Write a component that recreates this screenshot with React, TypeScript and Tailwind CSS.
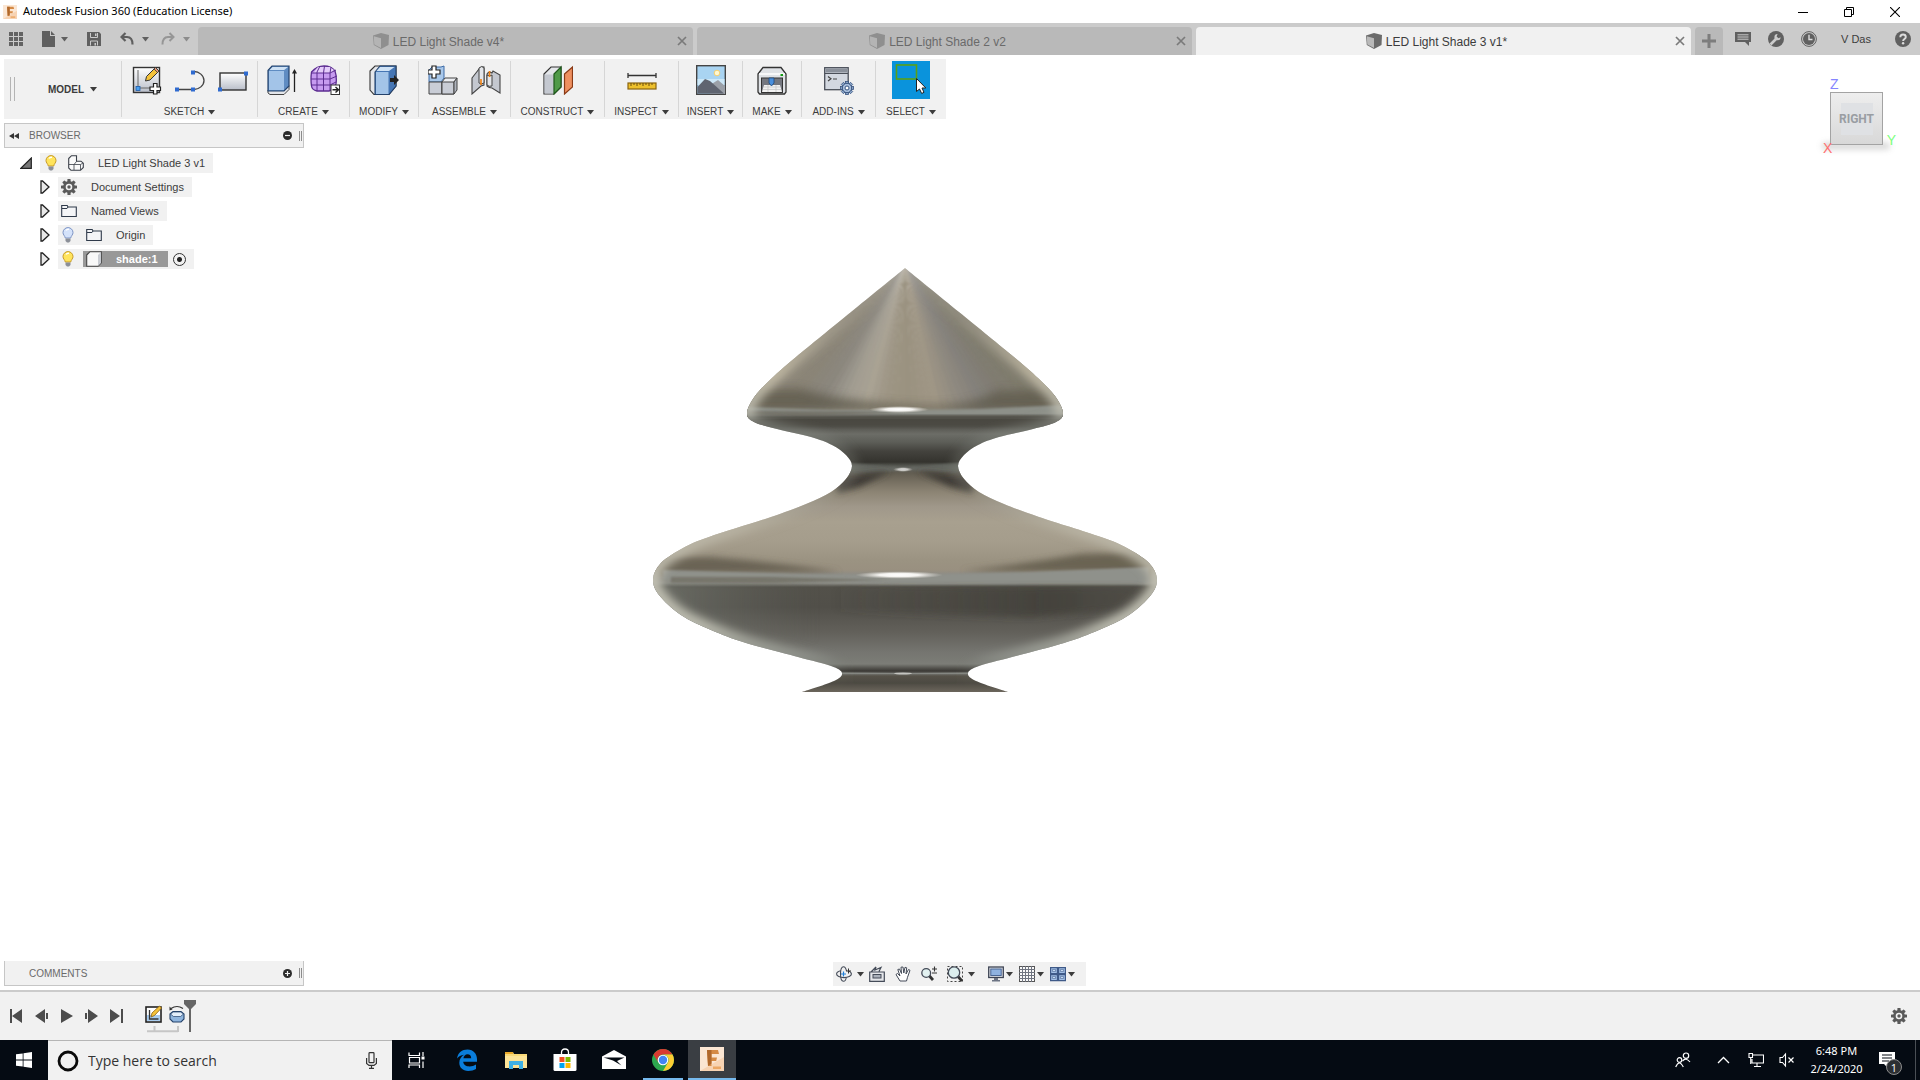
import type { ReactNode } from 'react';

// ── SHARED BITS ────────────────────────────────────────────────────────────

function Caret({ className = 'text-[#3c3c3c]' }: { className?: string }) {
  return (
    <svg width="7" height="5" viewBox="0 0 7 5" className={className} aria-hidden="true">
      <path d="M0 0h7L3.5 4.6z" fill="currentColor" />
    </svg>
  );
}

function Pic({ size = 16, box = size, children }: { size?: number; box?: number; children: ReactNode }) {
  return (
    <svg width={size} height={size} viewBox={`0 0 ${box} ${box}`} fill="none" className="shrink-0" aria-hidden="true">
      {children}
    </svg>
  );
}

const GEAR_TEETH = [0, 45, 90, 135, 180, 225, 270, 315];

function Gear({ size = 16 }: { size?: number }) {
  return (
    <Pic size={size} box={16}>
      {GEAR_TEETH.map((a) => (
        <rect key={a} x="6.4" y="0" width="3.2" height="4" rx="0.6" fill="#5a5a5a" transform={`rotate(${a} 8 8)`} />
      ))}
      <circle cx="8" cy="8" r="4.6" stroke="#5a5a5a" strokeWidth="2.6" />
      <circle cx="8" cy="8" r="1.7" fill="#5a5a5a" />
    </Pic>
  );
}

function FusionLogo({ size = 16 }: { size?: number }) {
  return (
    <Pic size={size} box={24}>
      <rect width="24" height="24" fill="#fbe6d3" />
      <path d="M0 24L24 10v14z" fill="#f7d3b3" />
      <path d="M7 3h11l1 4h-7.500v3.500H17l-.8 3.500h-4.700v5H8z" fill="#d58a45" />
      <path d="M7 3h4.500v13.500L8 19z" fill="#b0682c" />
      <path d="M13 19.500h8v2.500h-8z" fill="#eba765" />
    </Pic>
  );
}

// ── TAB STRIP ──────────────────────────────────────────────────────────────

function TabCube({ active }: { active?: boolean }) {
  return (
    <Pic size={16}>
      <path d="M0 2.500L8 0l8 2-.5 10L8 16 .8 12z" fill={active ? '#6b6b6b' : '#8f8f8f'} />
      <path d="M.8 3.200L8 5.200V15L1.300 11.500z" fill={active ? '#b9b9b9' : '#b4b4b4'} />
    </Pic>
  );
}

function DocTab({ name, active }: { name: string; active?: boolean }) {
  return (
    <div
      className={
        active
          ? 'flex h-7 flex-1 items-center rounded-t bg-[#f1f1f1] px-[6px] text-[#3c3c3c]'
          : 'flex h-7 flex-1 items-center rounded-t bg-[#b9b9b9] px-[6px] text-[#6a6a6a]'
      }
    >
      <button className="flex flex-1 items-center justify-center gap-1 pr-1 text-xs">
        <TabCube active={active} />
        <span className="pt-px">{name}</span>
      </button>
      <button aria-label={`Close ${name}`}>
        <Pic size={10}>
          <path d="M1 1l8 8M9 1L1 9" stroke="#7a7a7a" strokeWidth="1.700" />
        </Pic>
      </button>
    </div>
  );
}

function TabStrip() {
  return (
    <div className="flex h-8 shrink-0 bg-[#cbcbcb]">
      <div className="flex w-[198px] shrink-0 items-center pl-[9px] text-[#5f5f5f]">
        <button aria-label="Data panel">
          <Pic size={14}>
            {[0, 5, 10].map((y) => [0, 5, 10].map((x) => <rect key={`${x}-${y}`} x={x} y={y} width="4" height="4" fill="#636363" />))}
          </Pic>
        </button>
        <button aria-label="File" className="ml-[19px] flex items-center gap-[6px]">
          <svg width="13" height="16" viewBox="0 0 13 16" aria-hidden="true">
            <path d="M0 0h8v5h5v11H0zM9 0l4 4H9z" fill="#606060" />
          </svg>
          <Caret className="text-[#606060]" />
        </button>
        <button aria-label="Save" className="ml-[19px]">
          <Pic size={14}>
            <path d="M0 0h12l2 2v12H0z" fill="#606060" />
            <path d="M3.500 1v4.500h7V1M3.500 13.500V9h7v4.500" stroke="#cbcbcb" strokeWidth="1" />
            <path d="M7.500 11h1.500v2.500H7.500zM8 1.500h1.500V4H8z" fill="#cbcbcb" />
          </Pic>
        </button>
        <button aria-label="Undo" className="ml-[19px] flex items-center gap-2">
          <Pic size={14}>
            <path d="M5.500 1L1.500 5l4 4M1.500 5H7c3.500 0 5.500 2.500 5.500 7.500" stroke="#5f5f5f" strokeWidth="2.200" />
          </Pic>
          <Caret className="text-[#606060]" />
        </button>
        <button aria-label="Redo" className="ml-3 flex items-center gap-2">
          <Pic size={14}>
            <path d="M8.500 1l4 4-4 4M12.500 5H7c-3.500 0-5.500 2.500-5.500 7.500" stroke="#969696" strokeWidth="2" />
          </Pic>
          <Caret className="text-[#8c8c8c]" />
        </button>
      </div>

      <div className="flex min-w-0 flex-1 items-end gap-1">
        <DocTab name="LED Light Shade v4*" />
        <DocTab name="LED Light Shade 2 v2" />
        <DocTab name="LED Light Shade 3 v1*" active />
      </div>

      <div className="ml-1 flex w-[225px] shrink-0 items-center">
        <button aria-label="New design" className="flex h-7 w-7 items-center justify-center self-end rounded-t bg-[#b9b9b9]">
          <Pic size={14}>
            <path d="M7 0v14M0 7h14" stroke="#7d7d7d" strokeWidth="3" />
          </Pic>
        </button>
        <button aria-label="Comments" className="ml-3">
          <Pic size={16}>
            <path d="M0 1h16v10h-2v4l-4-4H0z" fill="#606060" />
            <path d="M2.500 3.800h11M2.500 6h11M2.500 8.200h11" stroke="#cbcbcb" strokeWidth="1" />
          </Pic>
        </button>
        <button aria-label="Extensions" className="ml-[17px]">
          <Pic size={16}>
            <circle cx="8" cy="8" r="8" fill="#606060" />
            <path d="M2.500 13.500L8 8" stroke="#cbcbcb" strokeWidth="2.600" />
            <path d="M12.600 6.300a3.100 3.100 0 1 1-3-3.200L8.600 5.500l1.900 1.800z" fill="#cbcbcb" />
          </Pic>
        </button>
        <button aria-label="Job status" className="ml-[17px]">
          <Pic size={16}>
            <circle cx="8" cy="8" r="7.400" stroke="#606060" strokeWidth="1" />
            <circle cx="8" cy="8" r="6" fill="#606060" />
            <path d="M8 3.800V8.500h3.500" stroke="#dcdcdc" strokeWidth="1.400" />
          </Pic>
        </button>
        <button className="ml-6 text-[11px] text-[#3c3c3c]">V Das</button>
        <button aria-label="Help" className="ml-6">
          <Pic size={16}>
            <circle cx="8" cy="8" r="8" fill="#606060" />
            <path d="M5.300 6.200C5.300 2.600 10.800 2.800 10.800 6c0 2-2.700 2-2.700 4" stroke="#dcdcdc" strokeWidth="1.900" />
            <circle cx="8.100" cy="12.300" r="1.200" fill="#dcdcdc" />
          </Pic>
        </button>
      </div>
    </div>
  );
}

// ── RIBBON ICONS (30 x 30) ─────────────────────────────────────────────────

function Ico({ children }: { children: ReactNode }) {
  return <Pic size={30}>{children}</Pic>;
}

const SketchIcon = () => (
  <Ico>
    <rect x="1.500" y="2.500" width="26" height="25" fill="url(#steel)" stroke="#333" strokeWidth="1.400" />
    <path d="M6 5v18h18" stroke="#666" strokeWidth="1" />
    <rect x="4" y="21.500" width="4" height="4" fill="#4aa0f0" stroke="#1c5aa8" strokeWidth=".8" />
    <path d="M13.500 16l1-4.500L23.500 2.500l3.500 3.500-9 9z" fill="#f5c33b" stroke="#333" strokeWidth="1" />
    <path d="M22 4l3.500 3.500L27 6l-3.500-3.500z" fill="#e89a7a" stroke="#333" strokeWidth=".8" />
    <path d="M21.500 18.500h3.500V22h3.500v3.500H25V29h-3.500v-3.500H18V22h3.500z" fill="#fff" stroke="#222" strokeWidth="1.200" />
  </Ico>
);

const LineIcon = () => (
  <Ico>
    <path d="M2 24.500h17c5 0 10-4 10-9s-5-9-10-9" stroke="#444" strokeWidth="1.300" />
    <path d="M0 22.500h4v4H0zM16 22.500h4v4h-4zM16 5.500h4v4h-4z" fill="#2f6bd0" />
  </Ico>
);

const RectIcon = () => (
  <Ico>
    <rect x="2" y="8" width="26" height="17" fill="url(#steel)" stroke="#333" strokeWidth="1.400" />
    <path d="M0 22.500h4v4H0zM26 6.500h4v4h-4z" fill="#2f6bd0" />
  </Ico>
);

const ExtrudeIcon = () => (
  <Ico>
    <path d="M1 25v3l2 1.500h14l5-5v-4z" fill="#e4e6ea" stroke="#444" strokeWidth="1" />
    <path d="M1 5.500L5 1h17v20l-5 5H1z" fill="#5f8cc2" stroke="#24426b" strokeWidth="1.200" />
    <path d="M2 6h15v19H2z" fill="#a3c4e8" />
    <path d="M2.500 5L5.500 2h15.500l-3.800 3z" fill="#cfe2f5" />
    <path d="M27.500 27V6" stroke="#222" strokeWidth="1.300" />
    <path d="M25 8.500L27.500 4 30 8.500z" fill="#222" />
  </Ico>
);

const FormIcon = () => (
  <Ico>
    <path d="M1.500 7Q7 1 14 1t11 5q2 6 1 13-2 6-7 7H7q-5-1-5.500-5-1-7 0-14z" fill="#c79bf0" stroke="#5c2d91" strokeWidth="1.300" />
    <path d="M6 4l2-2h12l4 3-3 3H4z" fill="#e4ccfa" />
    <path d="M1 8h19l6-3M1 14h19l7-3M1 20h19l6-3M7 26V7l3-6M13.500 26V8l1-7M20 26V8l1-6" stroke="#5c2d91" strokeWidth="1" />
    <rect x="21" y="20" width="8.500" height="9.500" fill="#fff" stroke="#333" strokeWidth="1" />
    <path d="M22.500 24.800h5.500M25.500 22l3 2.800-3 2.800" stroke="#222" strokeWidth="1.400" />
  </Ico>
);

const PressPullIcon = () => (
  <Ico>
    <path d="M1 6l5-5h21v20l-7 8.500H5L1 25z" fill="#e4e6ea" stroke="#333" strokeWidth="1.100" />
    <path d="M6 7l5-6h16v20l-7 8.500H6z" fill="#4676b4" stroke="#24426b" strokeWidth="1.100" />
    <path d="M7 7h12.500v22H7z" fill="#a3c4e8" />
    <path d="M7.500 6L11 2h14.500L20 6z" fill="#cfe2f5" />
    <path d="M21 13h4V10l5 5-5 5v-3h-4z" fill="#222" />
  </Ico>
);

const ComponentIcon = () => (
  <Ico>
    <path d="M1 5l3-3h9l3-1v12l-3 4H1z" fill="#a9c8ea" stroke="#3d6ba6" strokeWidth="1" />
    <path d="M1 17h13v12H1z" fill="#c9cdd6" stroke="#444" />
    <path d="M14 17l3-4h12l-3 4v12H14z" fill="#eceef2" stroke="#444" />
    <path d="M14 17h12v12H14z" fill="#c9cdd6" stroke="#444" />
    <path d="M26 17l3-4v12l-3 4z" fill="#aeb3bd" stroke="#444" />
    <path d="M4 1h4v4h4v4H8v4H4V9H0V5h4z" fill="#fff" stroke="#222" strokeWidth="1.200" />
  </Ico>
);

const JointIcon = () => (
  <Ico>
    <path d="M1 13l7-9q2-3 5-2v18l-3 1-9 8z" fill="#c4c8d0" stroke="#444" strokeWidth="1.100" />
    <path d="M8 3q3-3 5 0v15q-3 2-5 0z" fill="#e4e6ea" stroke="#444" />
    <path d="M16 9q2-3 5-1l1-2 7 4v18l-8-5q-3 0-5-2z" fill="#c4c8d0" stroke="#444" strokeWidth="1.100" />
    <path d="M16 10q3 2 5 0v11q-3 1-5-1z" fill="#e4e6ea" stroke="#444" />
    <path d="M10 14v6M18.500 6v6" stroke="#f08010" strokeWidth="1.600" />
  </Ico>
);

const PlaneIcon = () => (
  <Ico>
    <path d="M1 9l7-7h10v20l-7 7H1z" fill="#e4e6ea" stroke="#333" strokeWidth="1.200" />
    <path d="M1.500 9.500H11v19H1.500z" fill="#c4c8d0" />
    <path d="M11 9l7-7v20l-7 7z" fill="#4f9a48" stroke="#1f5a1c" strokeWidth="1.200" />
    <path d="M21.500 9l8-7v20l-8 7z" fill="#ee9060" stroke="#8a3a16" strokeWidth="1.200" />
  </Ico>
);

const MeasureIcon = () => (
  <Ico>
    <path d="M1 8v5M29 8v5M1 10.500h28" stroke="#333" strokeWidth="1.300" />
    <rect x="1" y="18" width="28" height="6" fill="#edc02c" stroke="#8a6410" strokeWidth="1.200" />
    <path d="M4 18v3M7 18v2M10 18v3M13 18v2M16 18v3M19 18v2M22 18v3M25 18v2" stroke="#6b4d0c" strokeWidth="1" />
  </Ico>
);

const InsertIcon = () => (
  <Ico>
    <rect x=".7" y=".7" width="28.600" height="28.600" fill="#a9d4f2" stroke="#444" strokeWidth="1.400" />
    <path d="M1.500 14h27v6h-27z" fill="#cde8f8" />
    <circle cx="21" cy="8" r="2.800" fill="#fff8d0" stroke="#f5cf70" />
    <path d="M14 20l8-5 7 6v8H14z" fill="#9ba0a8" />
    <path d="M1.500 22L9 14l5 2 14 12.500H1.500z" fill="#5f6470" />
  </Ico>
);

const MakeIcon = () => (
  <Ico>
    <path d="M1 9l5-6.500h18L29 9v18l-1.500 2h-25L1 27z" fill="#dfe2e6" stroke="#333" strokeWidth="1.300" />
    <path d="M2 9h26" stroke="#fff" strokeWidth="1.500" />
    <rect x="4.500" y="13" width="21" height="14.500" fill="#74777f" stroke="#333" />
    <path d="M7 20h16l2 7H5z" fill="#f2f2f2" />
    <path d="M7 22h16M6 24.500h18M11 20v7M19 20v7" stroke="#c4c4c4" strokeWidth=".7" />
    <path d="M12 13h5v5l-2.500 3-2.500-3z" fill="#4a8fdc" stroke="#1c4a80" strokeWidth=".8" />
    <rect x="23.500" y="9" width="2.500" height="2" fill="#159a15" />
  </Ico>
);

const AddInsIcon = () => (
  <Ico>
    <rect x=".7" y="2.700" width="23.500" height="22" fill="#d3d8e0" stroke="#4a4f58" strokeWidth="1.300" />
    <path d="M1.500 3.500h22v4h-22z" fill="#8a909a" />
    <path d="M1 8.500h23" stroke="#4a4f58" />
    <path d="M4 11.500l3 2.300-3 2.300M9 14h4" stroke="#444" strokeWidth="1.200" />
    {GEAR_TEETH.map((a) => (
      <rect key={a} x="21.500" y="16.500" width="3" height="3.500" fill="#8fa9cc" stroke="#38547f" strokeWidth=".8" transform={`rotate(${a} 23 23)`} />
    ))}
    <circle cx="23" cy="23" r="4.700" fill="#a9bfdd" stroke="#38547f" strokeWidth="1" />
    <circle cx="23" cy="23" r="2" fill="#fff" stroke="#38547f" />
  </Ico>
);

const SelectIcon = () => (
  <span className="flex h-[38px] w-[38px] items-center justify-center bg-[#0a93dc]">
    <Pic size={38}>
      <rect x="4.500" y="4" width="20" height="14" stroke="#5aa016" strokeWidth="1.600" />
      <path d="M24.500 17.500v13l3-2.500 2.200 4.500 2.300-1.200-2-4.300h3.800z" fill="#fff" stroke="#222" strokeWidth="1" />
    </Pic>
  </span>
);

type RibbonGroup = { label: string; className: string; icons: (() => ReactNode)[] };

const RIBBON: RibbonGroup[] = [
  { label: 'SKETCH', className: 'w-[136px]', icons: [SketchIcon, LineIcon, RectIcon] },
  { label: 'CREATE', className: 'w-[92px]', icons: [ExtrudeIcon, FormIcon] },
  { label: 'MODIFY', className: 'w-[69px]', icons: [PressPullIcon] },
  { label: 'ASSEMBLE', className: 'w-[92px]', icons: [ComponentIcon, JointIcon] },
  { label: 'CONSTRUCT', className: 'w-[94px]', icons: [PlaneIcon] },
  { label: 'INSPECT', className: 'w-[74px]', icons: [MeasureIcon] },
  { label: 'INSERT', className: 'w-[64px]', icons: [InsertIcon] },
  { label: 'MAKE', className: 'w-[59px]', icons: [MakeIcon] },
  { label: 'ADD-INS', className: 'w-[74px]', icons: [AddInsIcon] },
  { label: 'SELECT', className: 'w-[70px]', icons: [SelectIcon] },
];

function Ribbon() {
  return (
    <div className="ml-1 mt-1 flex h-[60px] w-fit items-center bg-[#f1f1f1]">
      <div className="flex h-14 w-[118px] items-center border-r border-[#d6d6d6] pl-[6px]">
        <span className="h-6 w-[5px] border-x border-[#b4b4b4]" />
        <button className="ml-[33px] flex items-center gap-[6px] text-[10px] font-bold text-[#3c3c3c]">
          MODEL <Caret />
        </button>
      </div>
      {RIBBON.map((g) => (
        <div key={g.label} className={`flex h-14 flex-col items-center justify-between border-r border-[#d6d6d6] last:border-0 ${g.className}`}>
          <div className="flex h-[38px] items-center gap-[13px]">
            {g.icons.map((Icon, i) => (
              <button key={i} aria-label={`${g.label} ${i + 1}`}>
                <Icon />
              </button>
            ))}
          </div>
          <button className="flex items-center gap-1 text-[10px] leading-[10px] text-[#3c3c3c]">
            {g.label} <Caret />
          </button>
        </div>
      ))}
    </div>
  );
}

// ── BROWSER TREE ───────────────────────────────────────────────────────────

function Bulb({ on }: { on?: boolean }) {
  return (
    <svg width="12" height="16" viewBox="0 0 12 16" aria-hidden="true">
      <path d="M6 .6a5 5 0 0 1 5 5c0 2.200-1.800 3-2.300 5.400H3.300C2.800 8.600 1 7.800 1 5.600a5 5 0 0 1 5-5z" fill={on ? '#ffe45c' : '#d4e2fa'} stroke={on ? '#c79a26' : '#7c93c4'} />
      <path d="M4 3.500Q5 2 7 2.300" stroke="#fff" strokeWidth="1.300" fill="none" />
      <path d="M3.500 11.500h5v2.500L7 15.500H5L3.500 14z" fill="#8b8f98" />
    </svg>
  );
}

const Folder = () => (
  <Pic size={16}>
    <path d="M.7 13.500V2.500h5.500l.8 1.500h8.300v9.500z" fill="#f4f5f7" stroke="#2f3a4a" strokeWidth="1.100" />
    <path d="M1 5.500h5l1-1.500" stroke="#2f3a4a" strokeWidth="1" />
  </Pic>
);

const Body = () => (
  <Pic size={16}>
    <path d="M.7 4L4 .7h11.300v11L12 15.300H.7z" fill="#f8f8f8" stroke="#444" strokeWidth="1.100" />
    <path d="M12 4l3-3v11l-3 3z" fill="#c9ccd2" />
  </Pic>
);

const Assembly = () => (
  <Pic size={16}>
    <path d="M.7 3.500L3.500.7h5v5.500h4.500l2.300 2v4.300l-2.800 2.800H3L.7 13z" fill="#fafafa" stroke="#3a3f48" strokeWidth="1.100" />
    <path d="M6 15V9.500l2.500-3M6 9.500h6.500l2.500-1.500M12.500 9.500V15M1 9.500h5" stroke="#3a3f48" strokeWidth=".8" />
  </Pic>
);

const Expander = () => (
  <button aria-label="Expand" className="w-[18px] shrink-0">
    <svg width="10" height="14" viewBox="0 0 10 14" aria-hidden="true">
      <path d="M1 1h1.500l6.500 6-6.500 6H1z" fill="#e8e8e8" stroke="#222" strokeWidth="1.300" />
    </svg>
  </button>
);

function PanelHeader({ title, open }: { title: string; open?: boolean }) {
  return (
    <>
      <span className="w-5 pl-1">
        {open && (
          <svg width="10" height="6" viewBox="0 0 10 6" aria-hidden="true">
            <path d="M5 0v6L0 3zM10 0v6L5 3z" fill="#333" />
          </svg>
        )}
      </span>
      <h2 className="ml-1 flex-1 text-[10px] text-[#6a6a6a]">{title}</h2>
      <button aria-label={open ? `Collapse ${title}` : `Expand ${title}`}>
        <Pic size={9}>
          <circle cx="4.500" cy="4.500" r="4.500" fill="#2b2b2b" />
          <path d={open ? 'M2 4.500h5' : 'M2 4.500h5M4.500 2v5'} stroke="#f1f1f1" strokeWidth="1.200" />
        </Pic>
      </button>
      <span className="ml-[7px] mr-px h-[10px] w-[3px] border-x border-[#8c8c8c]" />
    </>
  );
}

function BrowserPanel() {
  return (
    <div className="ml-1 mt-1 w-[300px] text-[11px] text-[#3c3c3c]">
      <div className="flex h-[25px] items-center border border-[#c6c6c6] bg-[#f1f1f1]">
        <PanelHeader title="BROWSER" open />
      </div>
      <ul className="mt-[5px] space-y-1">
        <li className="flex h-5 items-center pl-4">
          <button aria-label="Collapse" className="w-5">
            <svg width="12" height="12" viewBox="0 0 12 12" aria-hidden="true">
              <path d="M11.300 1v10.300H.8z" fill="#777" stroke="#222" strokeWidth="1.200" />
            </svg>
          </button>
          <span className="flex h-5 items-center bg-[#f1f1f1] pl-[5px] pr-2">
            <Bulb on />
            <span className="ml-[11px] mr-[14px]"><Assembly /></span>
            LED Light Shade 3 v1
          </span>
        </li>
        <li className="flex h-5 items-center pl-9">
          <Expander />
          <span className="flex h-5 items-center gap-[14px] bg-[#f1f1f1] pl-[3px] pr-2"><Gear /> Document Settings</span>
        </li>
        <li className="flex h-5 items-center pl-9">
          <Expander />
          <span className="flex h-5 items-center gap-[14px] bg-[#f1f1f1] pl-[3px] pr-2"><Folder /> Named Views</span>
        </li>
        <li className="flex h-5 items-center pl-9">
          <Expander />
          <span className="flex h-5 items-center bg-[#f1f1f1] pl-1 pr-2">
            <Bulb />
            <span className="ml-3 mr-[14px]"><Folder /></span>
            Origin
          </span>
        </li>
        <li className="flex h-5 items-center pl-9">
          <Expander />
          <label className="flex h-5 items-center bg-[#f1f1f1] pl-1 pr-2">
            <Bulb on />
            <span className="ml-[9px] flex h-4 items-center gap-[14px] bg-[#989898] pl-[3px] pr-[10px] font-bold text-white">
              <Body /> shade:1
            </span>
            <input
              type="radio"
              name="active-component"
              defaultChecked
              className="ml-[5px] h-[13px] w-[13px] appearance-none rounded-full border border-[#333] bg-[radial-gradient(circle,#222_0_2px,transparent_3px)]"
            />
          </label>
        </li>
      </ul>
    </div>
  );
}

// ── LAMP SHADE MODEL ───────────────────────────────────────────────────────

// left half of the revolved profile, tip first
const PROFILE = [
  [254, 1], [200, 45], [145, 90], [121, 111], [104, 129], [96, 146], [103, 155], [126, 162], [160, 170], [181, 178],
  [195, 188], [201, 199], [195, 212], [180, 225], [155, 237], [120, 250], [58, 270], [32, 281], [10, 296], [2, 312],
  [8, 328], [30, 348], [60, 363], [95, 376], [147, 390], [180, 399], [191, 406], [183, 414], [151, 425],
];

function smooth(points: number[][]) {
  let d = '';
  for (let i = 0; i < points.length - 1; i++) {
    const p0 = points[Math.max(i - 1, 0)];
    const p1 = points[i];
    const p2 = points[i + 1];
    const p3 = points[Math.min(i + 2, points.length - 1)];
    d += `C${p1[0] + (p2[0] - p0[0]) / 6} ${p1[1] + (p2[1] - p0[1]) / 6} ${p2[0] - (p3[0] - p1[0]) / 6} ${p2[1] - (p3[1] - p1[1]) / 6} ${p2[0]} ${p2[1]}`;
  }
  return d;
}

const MIRRORED = PROFILE.map(([x, y]) => [508 - x, y]).reverse();
const OUTLINE = `M254 1${smooth(PROFILE)}L357 425${smooth(MIRRORED)}Z`;

// slope of the ray from the tip, shade of the metal along it
const RAYS: [number, number[]][] = [
  [-1.4, [140, 134, 120]], [-0.82, [137, 131, 118]], [-0.61, [138, 134, 125]], [-0.44, [160, 155, 144]], [-0.28, [169, 162, 148]],
  [-0.14, [157, 149, 132]], [0.02, [154, 146, 128]], [0.22, [159, 150, 133]], [0.39, [144, 138, 128]], [0.57, [131, 128, 122]],
  [0.77, [127, 123, 112]], [0.93, [126, 122, 108]], [1.4, [128, 124, 112]],
];

const WEDGES = Array.from({ length: 56 }, (_, i) => {
  const s = -1.4 + i * 0.05;
  const k = Math.max(RAYS.findIndex(([r]) => r > s + 0.025), 1);
  const [r0, c0] = RAYS[k - 1];
  const [r1, c1] = RAYS[k];
  const f = (s + 0.025 - r0) / (r1 - r0);
  return {
    d: `M254 -3L${254 + s * 153} 150H${254 + (s + 0.055) * 153}Z`,
    fill: `rgb(${c0.map((c, j) => Math.round(c + (c1[j] - c) * f)).join(',')})`,
  };
});

const METAL: [number, string][] = [
  [140, '#8d8a80'], [147, '#77766f'], [150, '#4a4841'], [158, '#4f4e48'], [167, '#6c6d67'], [175, '#5d5e58'], [184, '#44433e'],
  [195, '#34332e'], [198, '#4f504a'], [202, '#62625c'], [206, '#625d51'], [214, '#756e60'], [225, '#8c8474'], [240, '#a0988a'],
  [255, '#a8a08f'], [275, '#a59d8c'], [293, '#9b9382'], [303, '#999080'], [307, '#8f8c84'], [316, '#8b8b84'], [320, '#53514a'],
  [340, '#514f49'], [365, '#62605a'], [385, '#757570'], [397, '#7c7d77'], [401, '#55544f'], [404, '#3b3935'], [407, '#6f6f6a'],
  [409, '#565249'], [416, '#4c4942'], [425, '#6b655b'],
];

function LampShade() {
  return (
    <svg viewBox="0 0 508 426" className="block h-[426px] w-[508px]" role="img" aria-label="Lamp shade model, right view">
      <defs>
        <clipPath id="outline"><path d={OUTLINE} /></clipPath>
        <linearGradient id="metal" gradientUnits="userSpaceOnUse" x1="0" y1="140" x2="0" y2="425">
          {METAL.map(([y, c]) => <stop key={y} offset={(y - 140) / 285} stopColor={c} />)}
        </linearGradient>
        <linearGradient id="rim" gradientUnits="userSpaceOnUse" x1="0" y1="0" x2="0" y2="426">
          <stop offset="0" stopColor="#a8a292" stopOpacity="0" />
          <stop offset=".1" stopColor="#a8a292" stopOpacity=".3" />
          <stop offset=".25" stopColor="#c4bca6" stopOpacity=".9" />
          <stop offset=".34" stopColor="#c0c0b4" stopOpacity=".9" />
          <stop offset=".37" stopColor="#8d918a" stopOpacity=".5" />
          <stop offset=".44" stopColor="#7d8079" stopOpacity=".3" />
          <stop offset=".52" stopColor="#9a978a" stopOpacity=".3" />
          <stop offset=".62" stopColor="#bdb8a8" stopOpacity=".8" />
          <stop offset=".73" stopColor="#c2c0b2" />
          <stop offset=".84" stopColor="#bdbdb0" />
          <stop offset=".92" stopColor="#969a93" stopOpacity=".7" />
          <stop offset=".94" stopColor="#7d8079" stopOpacity=".1" />
          <stop offset="1" stopColor="#7d8079" stopOpacity="0" />
        </linearGradient>
        <linearGradient id="shadeRight" x1="0" y1="0" x2="1" y2="0">
          <stop offset="0" stopColor="#403e38" stopOpacity="0" />
          <stop offset=".7" stopColor="#403e38" stopOpacity=".9" />
          <stop offset="1" stopColor="#4d4a43" stopOpacity=".7" />
        </linearGradient>
        <linearGradient id="greenLeft" x1="0" y1="0" x2="1" y2="0">
          <stop offset="0" stopColor="#8d938b" />
          <stop offset="1" stopColor="#6b6f69" stopOpacity="0" />
        </linearGradient>
        <radialGradient id="glint">
          <stop offset="0" stopColor="#fff" />
          <stop offset=".45" stopColor="#f4f3f0" />
          <stop offset="1" stopColor="#d8d5ce" stopOpacity="0" />
        </radialGradient>
        <filter id="soft1" x="-20%" y="-50%" width="140%" height="200%"><feGaussianBlur stdDeviation="1" /></filter>
        <filter id="soft3" x="-20%" y="-50%" width="140%" height="200%"><feGaussianBlur stdDeviation="3" /></filter>
        <filter id="soft6" x="-20%" y="-50%" width="140%" height="200%"><feGaussianBlur stdDeviation="5" /></filter>
      </defs>

      <g clipPath="url(#outline)">
        <rect y="138" width="508" height="288" fill="url(#metal)" />
        <g filter="url(#soft1)">
          {WEDGES.map((w) => <path key={w.d} d={w.d} fill={w.fill} />)}
        </g>

        {/* cone foot and rim band */}
        <path d="M80 122L150 122Q190 134 254 138T345 124L430 122V144H80Z" fill="#625d50" filter="url(#soft6)" opacity=".85" />
        <path d="M90 147L254 147 418 147V152H90Z" fill="#5c5b54" />
        <path d="M96 140L180 143 254 143 330 142 412 138V148H254L96 149Z" fill="#8d9089" filter="url(#soft1)" />
        <path d="M96 144L200 144.500 254 146 160 149H96Z" fill="#6e6c62" filter="url(#soft1)" opacity=".8" />
        <path d="M90 149H418V160H90Z" fill="#48463f" opacity=".55" filter="url(#soft1)" />
        <ellipse cx="248" cy="142.500" rx="30" ry="3.400" fill="url(#glint)" />

        {/* upper neck */}
        <path d="M190 196L252 200 318 195V208L258 202 190 209Z" fill="#6c706a" filter="url(#soft1)" opacity=".6" />
        <path d="M186 210L240 204 208 220 186 226Z" fill="#35332e" filter="url(#soft3)" opacity=".85" />
        <path d="M322 210L266 204 300 220 322 226Z" fill="#35332e" filter="url(#soft3)" opacity=".85" />
        <ellipse cx="252" cy="202.500" rx="10" ry="2.400" fill="url(#glint)" opacity=".7" />

        {/* wide disc */}
        <path d="M0 290L60 290Q120 295 190 305L0 307Z" fill="#625b4e" filter="url(#soft3)" opacity=".85" />
        <path d="M508 285L430 287Q370 298 310 304L508 306Z" fill="#625b4c" filter="url(#soft3)" opacity=".85" />
        <path d="M12 303L150 307 254 308 380 305 498 300V317H254L12 313Z" fill="#8f918b" filter="url(#soft1)" />
        <path d="M20 310L120 310 240 313 120 316H20Z" fill="#6e6c61" filter="url(#soft1)" opacity=".7" />
        <rect y="316" width="170" height="60" fill="url(#greenLeft)" opacity=".45" filter="url(#soft3)" />
        <path d="M180 320H490L470 342 380 350 180 345Z" fill="url(#shadeRight)" filter="url(#soft3)" opacity=".8" />
        <ellipse cx="248" cy="308" rx="44" ry="3.800" fill="url(#glint)" />

        {/* lower neck */}
        <path d="M190 405.500L254 406 318 405.500V407H190Z" fill="#858782" />
        <ellipse cx="252" cy="406.500" rx="9" ry=".9" fill="#c4c4c0" />

        <path d={OUTLINE} fill="none" stroke="url(#rim)" strokeWidth="14" filter="url(#soft6)" />
      </g>
    </svg>
  );
}

// ── VIEW CUBE ──────────────────────────────────────────────────────────────

function ViewCube() {
  return (
    <div className="absolute right-[37px] top-[37px] h-[53px] w-[53px]">
      <span className="absolute -bottom-1 -left-2 h-[6px] w-[68px] rounded-full bg-[#8c8c8c] opacity-40 blur-[3px]" />
      <span className="absolute -top-4 left-0 text-sm leading-4 text-[#8585ff]">Z</span>
      <button className="relative flex h-[53px] w-[53px] items-center justify-center border border-[#a3a3a3] bg-gradient-to-b from-[#eeeeee] to-[#d8d8d8] font-['Roboto',sans-serif] text-xs font-bold text-[#999da2]">
        <span className="flex h-8 w-8 items-center justify-center bg-[#dfe1e4]">RIGHT</span>
      </button>
      <span className="absolute -bottom-[9px] -left-[7px] text-sm leading-3 text-[#ff7070]">X</span>
      <span className="absolute -bottom-px -right-[13px] text-sm leading-3 text-[#7dff7d]">Y</span>
    </div>
  );
}

// ── NAVIGATION BAR ─────────────────────────────────────────────────────────

function NavBar() {
  return (
    <div className="absolute bottom-1 left-[833px] flex h-6 w-[253px] items-center bg-[#f1f1f1] pl-[3px]">
      <button aria-label="Orbit" className="flex items-center gap-[5px]">
        <Pic size={16}>
          <path d="M4.500 4.800C2 5.500.6 6.700.6 8c0 2 3.300 3.600 7.400 3.600s7.400-1.600 7.400-3.600c0-1.200-1.200-2.200-3-2.900" stroke="#444b58" strokeWidth="1.100" />
          <path d="M10.500 5C10 2.400 8.800.7 7.500.7c-1.700 0-3 3.200-3 7.300s1.300 7.300 3 7.300c1.300 0 2.400-1.500 2.800-3.800" stroke="#444b58" strokeWidth="1.100" />
          <path d="M7.500 5.500v5M5 8h5" stroke="#1f7fd8" strokeWidth="1.200" />
          <path d="M12.500 2.500v5M10 5h5" stroke="#333" />
        </Pic>
        <Caret />
      </button>
      <button aria-label="Look at" className="ml-[5px]">
        <Pic size={16}>
          <path d="M.7 6h14.600v9.300H.7zM2 6L7 1l-1 3 6-2.500-2 4" fill="#e4e6ea" stroke="#444b58" strokeWidth="1.200" />
          <rect x="4" y="8.500" width="8" height="3.500" fill="#aab0ba" stroke="#444b58" />
        </Pic>
      </button>
      <button aria-label="Pan" className="ml-[10px]">
        <Pic size={16}>
          <path d="M5 15L1 8.500 2.500 7.500 5 10 2.800 3.500 4.500 3 6.500 7.500 6 1.200 8 1l.8 6L10 1.300l1.700.5L11 8l2.500-4.500 1.500.8-2.500 7L11.500 15z" fill="#fff" stroke="#444b58" strokeWidth="1" />
        </Pic>
      </button>
      <button aria-label="Zoom" className="ml-[10px]">
        <Pic size={16}>
          <path d="M8 9.500l4 4.500" stroke="#333" strokeWidth="2.800" />
          <circle cx="5.200" cy="7" r="4.400" fill="#e2f1f0" stroke="#444b58" strokeWidth="1.300" />
          <path d="M11 3h5M13.500.5v5M11 7h5" stroke="#333" strokeWidth="1.100" />
        </Pic>
      </button>
      <button aria-label="Zoom window" className="ml-[10px] flex items-center gap-[5px]">
        <Pic size={16}>
          <path d="M.5.5h15v15H.5z" stroke="#444" strokeDasharray="2 2" />
          <path d="M11 10.500l4 4.500" stroke="#333" strokeWidth="2.800" />
          <circle cx="7" cy="6.500" r="5.700" fill="#dceeee" stroke="#444b58" strokeWidth="1.300" />
        </Pic>
        <Caret />
      </button>
      <button aria-label="Display settings" className="ml-[13px] flex items-center gap-[2px]">
        <Pic size={16}>
          <rect x=".7" y="1" width="14.600" height="10.500" fill="#dfe2e8" stroke="#3d4454" strokeWidth="1.300" />
          <rect x="2.800" y="3" width="10.400" height="6.500" fill="#8fb2e0" stroke="#4a6694" />
          <path d="M6 12h4v2h2v1.500H4V14h2z" fill="#6d7484" />
        </Pic>
        <Caret />
      </button>
      <button aria-label="Grid and snaps" className="ml-[6px] flex items-center gap-[2px]">
        <Pic size={16}>
          <rect x=".5" y=".5" width="15" height="15" fill="#fafafa" stroke="#555" />
          <path d="M3.500 0v16M6.500 0v16M9.500 0v16M12.500 0v16M0 3.500h16M0 6.500h16M0 9.500h16M0 12.500h16" stroke="#6f7480" />
        </Pic>
        <Caret />
      </button>
      <button aria-label="Viewports" className="ml-[6px] flex items-center gap-[2px]">
        <Pic size={16}>
          <path d="M.6 1.600h6.800v6H.6zM8.600 1.600h6.800v6H8.600zM.6 8.600h6.800v6H.6zM8.600 8.600h6.800v6H8.600z" fill="#a3c0e6" stroke="#3f5a88" strokeWidth="1.200" />
          <path d="M2.500 3.500h3v2h-3zM10.500 3.500h3v2h-3zM2.500 10.500h3v2h-3zM10.500 10.500h3v2h-3z" fill="#c6daf2" stroke="#4a6694" strokeWidth=".6" />
        </Pic>
        <Caret />
      </button>
    </div>
  );
}

// ── TIMELINE ───────────────────────────────────────────────────────────────

const PLAYBACK = [
  { name: 'Go to start', d: 'M0 0h2v14H0zM12 0v14L2 7z' },
  { name: 'Step back', d: 'M10 0v14L0 7zM11 4h2v6h-2z' },
  { name: 'Play', d: 'M1 0l12 7-12 7z' },
  { name: 'Step forward', d: 'M3 0l10 7-10 7zM0 4h2v6H0z' },
  { name: 'Go to end', d: 'M0 0l10 7-10 7zM11 0h2v14h-2z' },
];

function Timeline() {
  return (
    <div className="flex h-[50px] shrink-0 items-center border-t-2 border-[#cbcbcb] bg-[#f1f1f1] pl-[10px] pr-[13px]">
      <div className="flex gap-3">
        {PLAYBACK.map((b) => (
          <button key={b.name} aria-label={b.name}>
            <svg width="13" height="14" viewBox="0 0 13 14" aria-hidden="true">
              <path d={b.d} fill="#4c4c4c" />
            </svg>
          </button>
        ))}
      </div>
      <svg width="52" height="34" viewBox="0 0 52 34" fill="none" className="ml-[21px]" role="img" aria-label="Timeline features">
        <rect x="2" y="8" width="15" height="15" fill="#fff" stroke="#222" strokeWidth="1.600" />
        <path d="M3 16h13v6H3z" fill="#a9cdf0" />
        <path d="M5.500 11v9h9" stroke="#333" strokeWidth="1.300" />
        <path d="M7 18l1-4 7.500-7 2 2-7 7.500z" fill="#f5c33b" stroke="#8a5f10" strokeWidth=".8" />
        <path d="M26 15l3-2.500h8l3 2.500v5L37 23h-8l-3-3z" fill="#8fb5de" stroke="#24426b" strokeWidth="1.100" />
        <path d="M26.500 15l3-2h7l3 2-3 2.500h-7z" fill="#e2eefa" stroke="#24426b" strokeWidth=".7" />
        <path d="M27 9.500Q33 5.500 39 9.500" stroke="#333" strokeWidth="1.200" />
        <path d="M25.500 11.500v-4l3 3z" fill="#333" />
        <path d="M3 32.200h31M10.500 27v5.500M34 27v6" stroke="#c6c6c6" strokeWidth="2" />
        <path d="M40 1h12v4l-5 5v23h-2V10l-5-5z" fill="#666" />
      </svg>
      <button aria-label="Timeline settings" className="ml-auto">
        <Gear />
      </button>
    </div>
  );
}

// ── TASKBAR ────────────────────────────────────────────────────────────────

function TaskButton({ name, className = '', children }: { name: string; className?: string; children: ReactNode }) {
  return (
    <button aria-label={name} className={`flex h-10 w-12 items-center justify-center ${className}`}>
      {children}
    </button>
  );
}

function Taskbar() {
  return (
    <div className="flex h-10 shrink-0 items-center bg-[#050b13] font-['Open_Sans','Noto_Sans',sans-serif] text-white">
      <TaskButton name="Start">
        <Pic size={16}>
          <path d="M0 2.300l6.700-.9v6.200H0zM7.500 1.300L16 0v7.600H7.500zM0 8.400h6.700v6.200L0 13.700zM7.500 8.400H16V16l-8.500-1.300z" fill="#fff" />
        </Pic>
      </TaskButton>
      <div className="flex h-10 w-[344px] items-center border-t border-[#b5b5b5] bg-[#f1f1f1] pl-[9px] pr-[15px]">
        <Pic size={22}>
          <circle cx="11" cy="11" r="9" stroke="#0a0a0a" strokeWidth="2.800" />
        </Pic>
        <input
          type="search"
          aria-label="Search Windows"
          placeholder="Type here to search"
          className="ml-[9px] min-w-0 flex-1 bg-transparent text-sm text-[#2b2b2b] outline-none placeholder:text-[#333]"
        />
        <button aria-label="Voice search">
          <svg width="11" height="17" viewBox="0 0 11 17" fill="none" aria-hidden="true">
            <rect x="3" y=".7" width="5" height="10" rx=".8" stroke="#333" strokeWidth="1.200" />
            <path d="M.6 6v5.500L3 13.400h5l2.400-1.900V6M5.500 13.500v2.800M3 16.300h5" stroke="#333" strokeWidth="1.200" />
          </svg>
        </button>
      </div>

      <TaskButton name="Task view">
        <Pic size={17}>
          <path d="M1 .5v3h10.500v-3M1 16v-3h10.500v3M1.500 5.500h10v5.500h-10zM15 0v4M15 9.500V16" stroke="#fff" strokeWidth="1.200" />
          <rect x="13.500" y="4.500" width="3" height="3" fill="#fff" />
        </Pic>
      </TaskButton>
      <div className="ml-[3px] flex gap-px">
        <TaskButton name="Edge">
          <Pic size={22}>
            <path d="M1 9.500C2 3.500 6 .5 11.500.5 17.500.5 21 5 21 10v2.800H7.200c.3 3 2.800 4.700 6.300 4.700 2.500 0 4.700-.7 6.500-1.900V20c-2 1.200-4.700 2-7.800 2C6.700 22 3.300 18.500 3.300 13.800c0-3.800 2.200-6.500 4.800-8C5 6 2.300 7.800 1 9.500zM7.400 9.200h7.800c0-2.600-1.400-4-3.700-4-2.200 0-3.800 1.700-4.100 4z" fill="#0a7ddb" />
          </Pic>
        </TaskButton>
        <TaskButton name="File Explorer">
          <Pic size={22}>
            <path d="M0 3h8l1 2h13v14H0z" fill="#f9d978" />
            <path d="M0 3h8v2H0z" fill="#e9a92a" />
            <path d="M0 7h22v12H0z" fill="#fde497" />
            <path d="M4 12h14v8h-4v-4H8v4H4z" fill="#3fb1e5" />
          </Pic>
        </TaskButton>
        <TaskButton name="Store">
          <Pic size={24}>
            <path d="M8.500 6V4.500Q8.500 1 12 1t3.500 3.500V6" stroke="#fff" strokeWidth="1.300" />
            <path d="M.5 6h23v15.500q0 1.500-1.500 1.500H2Q.5 23 .5 21.500z" fill="#fff" />
            <path d="M6.500 9h5v5h-5z" fill="#f25022" />
            <path d="M12.500 9h5v5h-5z" fill="#7fba00" />
            <path d="M6.500 15h5v5h-5z" fill="#00a4ef" />
            <path d="M12.500 15h5v5h-5z" fill="#ffb900" />
          </Pic>
        </TaskButton>
        <TaskButton name="Mail">
          <Pic size={24}>
            <path d="M0 8.500L12 2l12 6.500V21H0z" fill="#fff" />
            <path d="M1.500 9.500H22.500L15 13l4.500 4.500L11 12.500z" fill="#050b13" />
          </Pic>
        </TaskButton>
        <TaskButton name="Chrome" className="relative">
          <Pic size={22}>
            <circle cx="11" cy="11" r="11" fill="#2da94f" />
            <path d="M1.500 5.500A11 11 0 0 1 20.500 5.500H11a5.500 5.500 0 0 0-4.800 8.200z" fill="#d93a30" />
            <path d="M20.500 5.500A11 11 0 0 1 11 22l4.800-8.200A5.500 5.500 0 0 0 11 5.500z" fill="#fccd33" />
            <circle cx="11" cy="11" r="5.300" fill="#fff" />
            <circle cx="11" cy="11" r="4.200" fill="#4285f4" />
          </Pic>
          <span className="absolute inset-x-1 bottom-0 h-[2px] bg-[#76b9ed]" />
        </TaskButton>
        <TaskButton name="Fusion 360" className="border-b-2 border-[#76b9ed] bg-[#3a3e43]">
          <FusionLogo size={24} />
        </TaskButton>
      </div>

      <div className="ml-auto flex h-10 items-center">
        <button aria-label="People">
          <Pic size={16}>
            <circle cx="11" cy="3.700" r="2.700" stroke="#fff" strokeWidth="1.200" />
            <circle cx="4.500" cy="8" r="2.300" stroke="#fff" strokeWidth="1.200" />
            <path d="M7.500 9Q11 5 15 10M.7 15q3.500-8 7.600 0" stroke="#fff" strokeWidth="1.200" />
          </Pic>
        </button>
        <button aria-label="Show hidden icons" className="ml-[26px]">
          <svg width="13" height="8" viewBox="0 0 13 8" fill="none" aria-hidden="true">
            <path d="M1 7l5.500-5.500L12 7" stroke="#fff" strokeWidth="1.300" />
          </svg>
        </button>
        <button aria-label="Network" className="ml-[18px]">
          <Pic size={16}>
            <path d="M5 3h10.500v8H4V7M9 11v3M6 14.500h7M1 1.500h3.500v4H1zM2.700 5.500V12" stroke="#fff" strokeWidth="1.100" />
          </Pic>
        </button>
        <button aria-label="Volume muted" className="ml-[15px]">
          <Pic size={16}>
            <path d="M1 5.500h2.500L6.500 2v12L3.500 10.500H1z" stroke="#fff" strokeWidth="1.100" />
            <path d="M9.500 5.500l5 5M14.500 5.500l-5 5" stroke="#fff" strokeWidth="1.200" />
          </Pic>
        </button>
        <button className="w-[83px] text-center font-['Noto_Sans',sans-serif] text-[11px] leading-[18px]">
          <span className="block">6:48 PM</span>
          <span className="block">2/24/2020</span>
        </button>
        <button aria-label="Notifications" className="relative mr-[19px]">
          <Pic size={18}>
            <path d="M1 1h16v12H9v3l-3-3H1z" fill="#fff" />
            <path d="M4 4h10M4 7h10M4 10h7" stroke="#050b13" strokeWidth="1.100" />
          </Pic>
          <span className="absolute -bottom-[6px] left-2 flex h-4 w-4 items-center justify-center rounded-full border border-[#8c8c8c] bg-[#2c2f33] text-[11px] leading-none">
            1
          </span>
        </button>
        <span className="mr-1 h-10 w-px bg-[#4a4f55]" />
      </div>
    </div>
  );
}

// ── WINDOW ─────────────────────────────────────────────────────────────────

export default function App() {
  return (
    <div className="flex h-screen min-h-[800px] flex-col overflow-hidden bg-white font-['Liberation_Sans',Arial,sans-serif]">
      <svg width="0" height="0" className="absolute" aria-hidden="true">
        <linearGradient id="steel" x1="0" y1="0" x2="0" y2="1">
          <stop offset="0" stopColor="#ffffff" />
          <stop offset="1" stopColor="#b9bec9" />
        </linearGradient>
      </svg>

      <header className="flex h-[23px] shrink-0 items-center pl-[3px] pr-5 text-black">
        <FusionLogo size={14} />
        <h1 className="ml-[6px] font-['Noto_Sans',sans-serif] text-[11px]">Autodesk Fusion 360 (Education License)</h1>
        <div className="ml-auto flex items-center gap-9">
          <button aria-label="Minimize">
            <Pic size={10}><path d="M0 5.500h10" stroke="#000" /></Pic>
          </button>
          <button aria-label="Restore">
            <Pic size={10}><path d="M.5 2.500h7v7h-7zM2.500 2.500v-2h7v7h-2" stroke="#000" /></Pic>
          </button>
          <button aria-label="Close">
            <Pic size={10}><path d="M0 0l10 10M10 0L0 10" stroke="#000" strokeWidth="1.100" /></Pic>
          </button>
        </div>
      </header>

      <TabStrip />

      <main className="relative flex min-h-0 flex-1 flex-col">
        <Ribbon />
        <BrowserPanel />
        <div className="absolute left-[33.9%] top-[212px]">
          <LampShade />
        </div>
        <ViewCube />
        <section className="mb-1 ml-1 mt-auto flex h-[25px] w-[300px] items-center border border-t-0 border-[#c6c6c6] bg-[#f1f1f1]">
          <PanelHeader title="COMMENTS" />
        </section>
        <NavBar />
      </main>

      <Timeline />
      <Taskbar />
    </div>
  );
}
